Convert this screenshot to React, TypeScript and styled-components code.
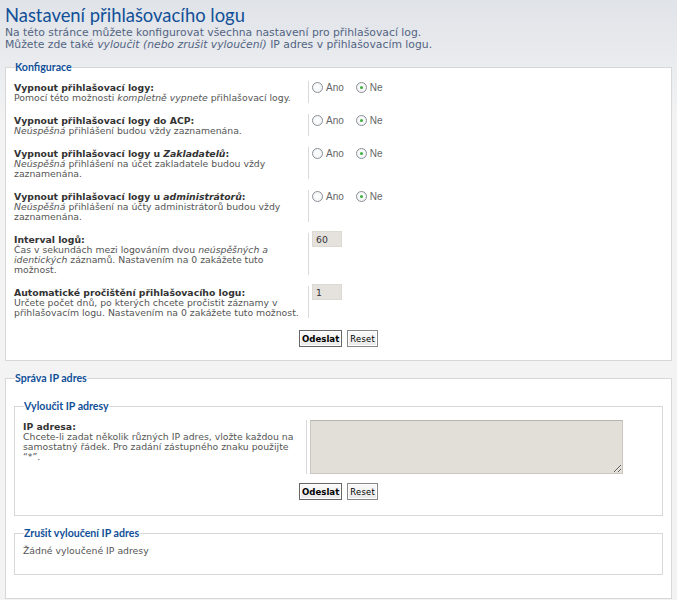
import styled, { createGlobalStyle } from 'styled-components'

const GlobalStyle = createGlobalStyle`
  html, body {
    margin: 0;
    padding: 0;
  }
  body {
    background: linear-gradient(#e0e3e8 0px, #e9ebee 60px, #f3f3f3 120px) #f3f3f3 no-repeat;
    font-family: "DejaVu Sans", Verdana, sans-serif;
    font-size: 9.3px;
    color: #333;
  }
`

const Page = styled.div`
  padding: 4px 5px 6px;
`

const Title = styled.h1`
  margin: 0 0 1px;
  font-family: Lato, "Open Sans", sans-serif;
  font-weight: 400;
  font-size: 18.4px;
  line-height: 22px;
  color: #115098;
`

const Intro = styled.p`
  margin: 0 0 9px;
  font-size: 10.8px;
  line-height: 12px;
  color: #536482;
`

const Fieldset = styled.fieldset`
  margin: 0 0 10px;
  padding: 0 8px 13px;
  border: 1px solid #d7d7d7;
  background: #fff;
  min-width: 0;
`

const InnerFieldset = styled(Fieldset)`
  margin-bottom: 10px;
  padding-bottom: 15px;
`

const Legend = styled.legend`
  padding: 0;
  margin-left: 1px;
  font-family: Lato, "Open Sans", sans-serif;
  font-weight: 700;
  font-size: 10.6px;
  line-height: 14px;
  color: #115098;
`

const Rows = styled.div`
  padding-top: 7px;
`

const IpBody = styled.div`
  padding-top: 14px;
`

const Row = styled.dl<{ $labelWidth: number; $gap?: number }>`
  display: flex;
  margin: 0 0 ${(p) => p.$gap ?? 11}px;

  dt {
    width: ${(p) => p.$labelWidth}px;
    flex: none;
    margin: 0;
    line-height: 10px;
    padding-top: 2px;
  }

  dd {
    margin: 0;
    padding-left: 3px;
    border-left: 1px solid #d9d9d9;
  }
`

const Label = styled.div`
  font-weight: 700;
  color: #333;
`

const Desc = styled.div`
  color: #555;
`

const RadioGroup = styled.div`
  display: flex;
  align-items: center;
  gap: 12px;
  height: 13px;
  font-family: "Liberation Sans", Arial, sans-serif;
  font-size: 10px;
  color: #666;
`

const RadioLabel = styled.label`
  display: flex;
  align-items: center;
  gap: 3px;
`

const Radio = styled.span<{ $checked?: boolean }>`
  width: 9px;
  height: 9px;
  border: 1px solid #8a8f96;
  border-radius: 50%;
  background: radial-gradient(#ffffff, #eef0f2);
  display: inline-flex;
  align-items: center;
  justify-content: center;

  &::after {
    content: '';
    width: 3px;
    height: 3px;
    border-radius: 50%;
    background: ${(p) => (p.$checked ? '#3cae3c' : 'transparent')};
  }
`

const TextInput = styled.div`
  width: 30px;
  height: 16px;
  box-sizing: border-box;
  margin-top: -2px;
  padding: 2px 3px;
  background: #e5e2dd;
  border: 1px solid #dcd8d2;
  font-size: 9.3px;
  line-height: 11px;
  color: #333;
`

const TextArea = styled.textarea`
  display: block;
  width: 313px;
  height: 54px;
  box-sizing: border-box;
  margin: 0;
  background: #e2dfd9;
  border: 1px solid #c9c5bf;
  border-top-color: #b9b5af;
  resize: both;
`

const Buttons = styled.div`
  display: flex;
  justify-content: center;
  gap: 5px;
  padding-top: 1px;
`

const Button = styled.button<{ $primary?: boolean }>`
  height: 17px;
  padding: 0 2px;
  font-family: "DejaVu Sans", Verdana, sans-serif;
  font-size: ${(p) => (p.$primary ? '8.6px' : '8.3px')};
  letter-spacing: ${(p) => (p.$primary ? '0' : '0.3px')};
  font-weight: ${(p) => (p.$primary ? 700 : 400)};
  color: #000;
  background: linear-gradient(#fafafa, #e9e9e9);
  border: 1px solid ${(p) => (p.$primary ? '#666' : '#888')};
  box-shadow: inset 0 0 0 1px #fff;
`

const Note = styled.p`
  margin: 0;
  padding: 6px 0 3px;
  line-height: 10px;
  color: #555;
`

function YesNo() {
  return (
    <RadioGroup>
      <RadioLabel>
        <Radio /> Ano
      </RadioLabel>
      <RadioLabel>
        <Radio $checked /> Ne
      </RadioLabel>
    </RadioGroup>
  )
}

export default function App() {
  return (
    <>
      <GlobalStyle />
      <Page>
        <Title>Nastavení přihlašovacího logu</Title>
        <Intro>
          Na této stránce můžete konfigurovat všechna nastavení pro přihlašovací log.
          <br />
          Můžete zde také <i>vyloučit (nebo zrušit vyloučení)</i> IP adres v přihlašovacím logu.
        </Intro>

        <Fieldset>
          <Legend>Konfigurace</Legend>
          <Rows>
            <Row $labelWidth={294}>
              <dt>
                <Label>Vypnout přihlašovací logy:</Label>
                <Desc>
                  Pomocí této možnosti <i>kompletně vypnete</i> přihlašovací logy.
                </Desc>
              </dt>
              <dd>
                <YesNo />
              </dd>
            </Row>
            <Row $labelWidth={294}>
              <dt>
                <Label>Vypnout přihlašovací logy do ACP:</Label>
                <Desc>
                  <i>Neúspěšná</i> přihlášení budou vždy zaznamenána.
                </Desc>
              </dt>
              <dd>
                <YesNo />
              </dd>
            </Row>
            <Row $labelWidth={294}>
              <dt>
                <Label>
                  Vypnout přihlašovací logy u <i>Zakladatelů</i>:
                </Label>
                <Desc>
                  <i>Neúspěšná</i> přihlášení na účet zakladatele budou vždy zaznamenána.
                </Desc>
              </dt>
              <dd>
                <YesNo />
              </dd>
            </Row>
            <Row $labelWidth={294}>
              <dt>
                <Label>
                  Vypnout přihlašovací logy u <i>administrátorů</i>:
                </Label>
                <Desc>
                  <i>Neúspěšná</i> přihlášení na účty administrátorů budou vždy zaznamenána.
                </Desc>
              </dt>
              <dd>
                <YesNo />
              </dd>
            </Row>
            <Row $labelWidth={294}>
              <dt>
                <Label>Interval logů:</Label>
                <Desc>
                  Čas v sekundách mezi logováním dvou <i>neúspěšných a identických</i> záznamů.
                  Nastavením na 0 zakážete tuto možnost.
                </Desc>
              </dt>
              <dd>
                <TextInput>60</TextInput>
              </dd>
            </Row>
            <Row $labelWidth={294}>
              <dt>
                <Label>Automatické pročištění přihlašovacího logu:</Label>
                <Desc>
                  Určete počet dnů, po kterých chcete pročistit záznamy v přihlašovacím logu.
                  Nastavením na 0 zakážete tuto možnost.
                </Desc>
              </dt>
              <dd>
                <TextInput>1</TextInput>
              </dd>
            </Row>
          </Rows>
          <Buttons>
            <Button $primary>Odeslat</Button>
            <Button>Reset</Button>
          </Buttons>
        </Fieldset>

        <Fieldset>
          <Legend>Správa IP adres</Legend>
          <IpBody>
            <InnerFieldset>
              <Legend>Vyloučit IP adresy</Legend>
              <Rows>
                <Row $labelWidth={283} $gap={8}>
                  <dt>
                    <Label>IP adresa:</Label>
                    <Desc>
                      Chcete-li zadat několik různých IP adres, vložte každou na samostatný řádek.
                      Pro zadání zástupného znaku použijte “*”.
                    </Desc>
                  </dt>
                  <dd>
                    <TextArea />
                  </dd>
                </Row>
              </Rows>
              <Buttons>
                <Button $primary>Odeslat</Button>
                <Button>Reset</Button>
              </Buttons>
            </InnerFieldset>

            <InnerFieldset>
              <Legend>Zrušit vyloučení IP adres</Legend>
              <Note>Žádné vyloučené IP adresy</Note>
            </InnerFieldset>
          </IpBody>
        </Fieldset>
      </Page>
    </>
  )
}
